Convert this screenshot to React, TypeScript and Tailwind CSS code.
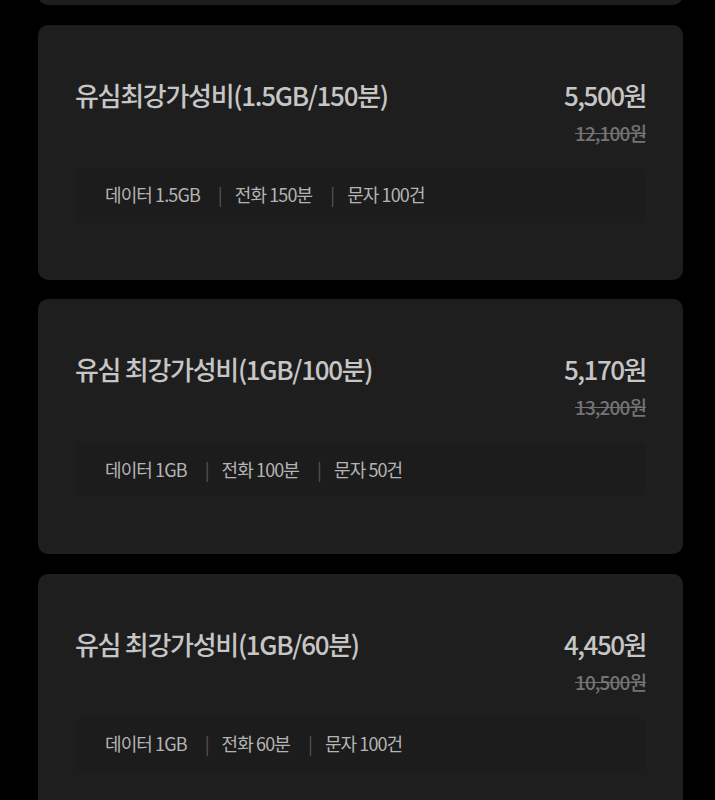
import React from "react";

type Plan = {
  title: string;
  price: string;
  old: string;
  data: string;
  call: string;
  sms: string;
};

const plans: Plan[] = [
  { title: "유심최강가성비(1.5GB/150분)", price: "5,500원", old: "12,100원", data: "데이터 1.5GB", call: "전화 150분", sms: "문자 100건" },
  { title: "유심 최강가성비(1GB/100분)", price: "5,170원", old: "13,200원", data: "데이터 1GB", call: "전화 100분", sms: "문자 50건" },
  { title: "유심 최강가성비(1GB/60분)", price: "4,450원", old: "10,500원", data: "데이터 1GB", call: "전화 60분", sms: "문자 100건" },
];

const font = { fontFamily: '"Noto Sans CJK KR", "Noto Sans", sans-serif' };

function Card({ p }: { p: Plan }) {
  return (
    <div className="w-[645px] h-[255px] shrink-0 rounded-[10px] bg-[#1e1e1e] px-[37px] pt-[51px]">
      <div className="flex justify-between items-start h-[70px]">
        <div className="text-[26px] leading-[38px] font-medium tracking-[-1.3px] text-[#c6c6c6]">{p.title}</div>
        <div className="flex flex-col items-end">
          <div className="text-[26px] leading-[38px] font-medium tracking-[-1.5px] text-[#c6c6c6]">{p.price}</div>
          <div className="mt-[5px] text-[19px] leading-[27px] font-medium tracking-[-0.9px] text-[#747474] line-through">{p.old}</div>
        </div>
      </div>
      <div className="mt-[22px] h-[55px] rounded-[8px] bg-[#1c1c1c] flex items-center pl-[30px] pb-[1px] text-[18px] tracking-[-0.9px] text-[#b4b4b4]">
        <span>{p.data}</span>
        <span className="ml-[18px] mr-[13px] text-[#565656]">|</span>
        <span>{p.call}</span>
        <span className="ml-[18px] mr-[13px] text-[#565656]">|</span>
        <span>{p.sms}</span>
      </div>
    </div>
  );
}

export default function App() {
  return (
    <div className="w-[715px] h-[800px] overflow-hidden bg-black" style={font}>
      <div className="ml-[38px] flex flex-col gap-[19.5px] mt-[-250px]">
        <div className="w-[645px] h-[255px] shrink-0 rounded-[10px] bg-[#1e1e1e]" />
        {plans.map((p, i) => (
          <Card key={i} p={p} />
        ))}
      </div>
    </div>
  );
}
